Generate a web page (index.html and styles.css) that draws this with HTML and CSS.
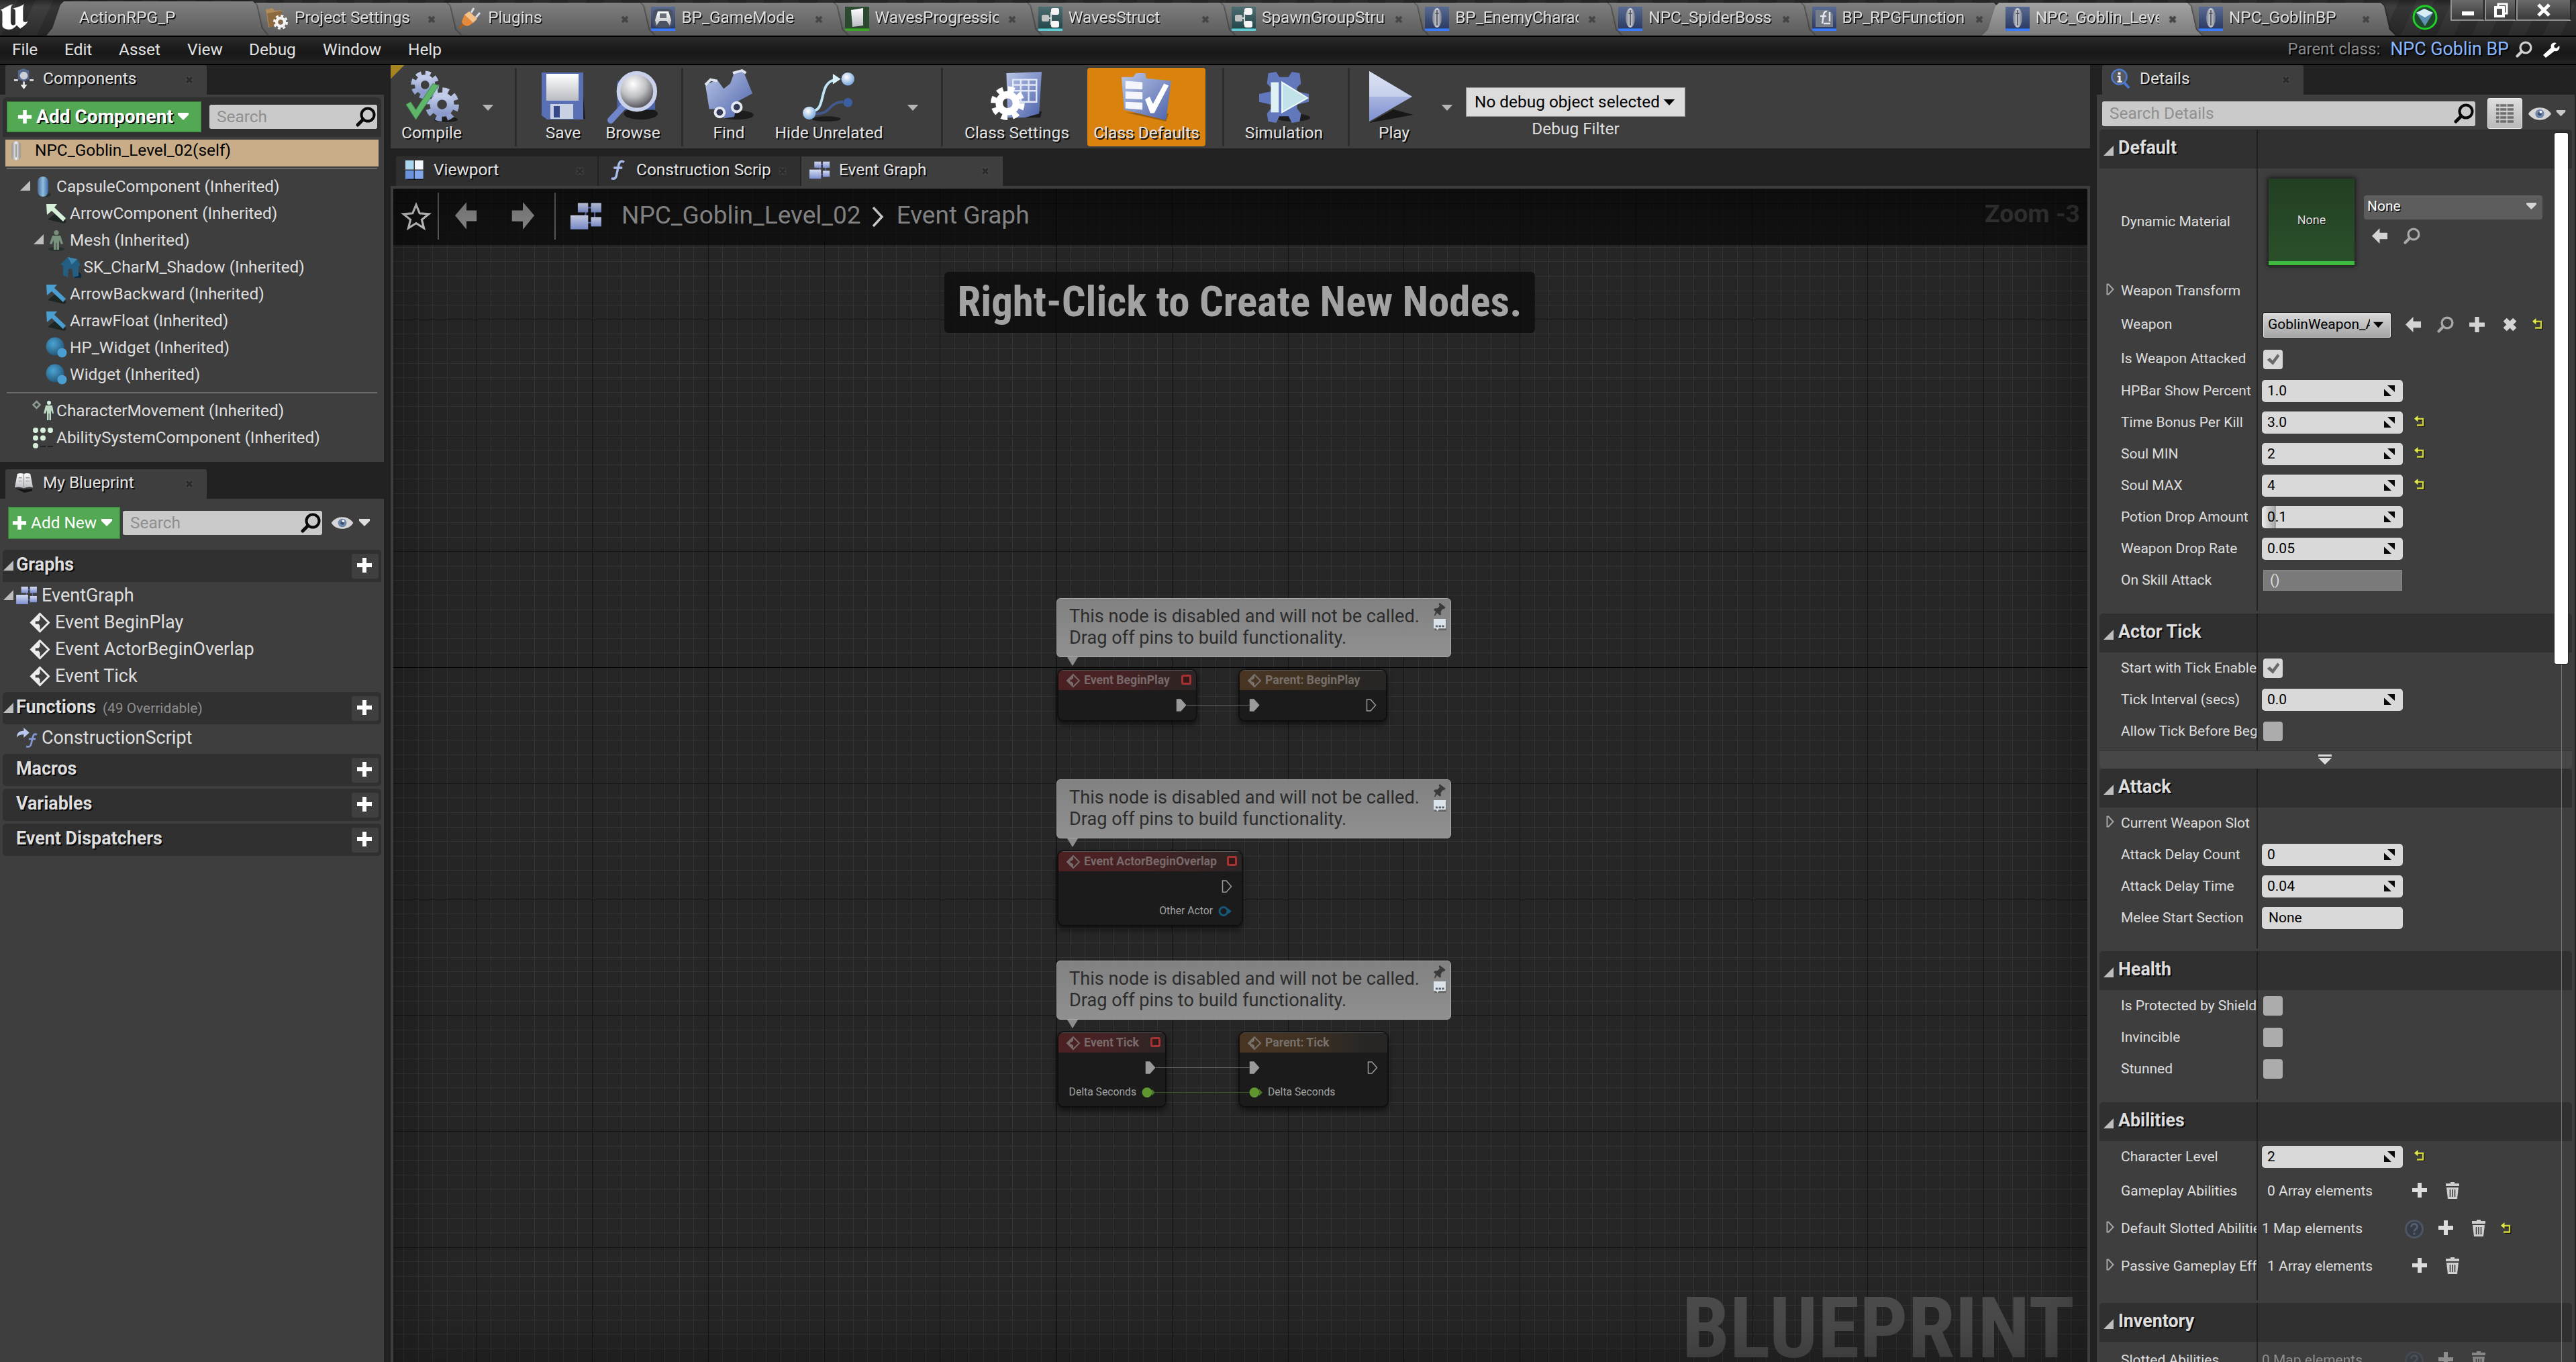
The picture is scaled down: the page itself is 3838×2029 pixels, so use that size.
FILE: index.html
```html
<!DOCTYPE html>
<html lang="en">
<head>
<meta charset="utf-8">
<title>NPC_Goblin_Level_02</title>
<link rel="stylesheet" href="styles.css">
</head>
<body>
<svg class="defs" width="0" height="0" aria-hidden="true">
  <defs>
    <linearGradient id="blue" x1="0" y1="0" x2="0" y2="1"><stop offset="0" stop-color="#d5dcf2"/><stop offset="1" stop-color="#7d8fd0"/></linearGradient>
    <linearGradient id="gear" x1="0" y1="0" x2="0" y2="1"><stop offset="0" stop-color="#c3cdea"/><stop offset="1" stop-color="#8b9acb"/></linearGradient>
    <linearGradient id="steel" x1="0" y1="0" x2="1" y2="1"><stop offset="0" stop-color="#b9c6e6"/><stop offset="1" stop-color="#4d63ac"/></linearGradient>
    <linearGradient id="white" x1="0" y1="0" x2="0" y2="1"><stop offset="0" stop-color="#ffffff"/><stop offset="1" stop-color="#b9bcc2"/></linearGradient>
    <linearGradient id="cap" x1="0" y1="0" x2="1" y2="0"><stop offset="0" stop-color="#4d6a9a"/><stop offset=".5" stop-color="#8fc0dc"/><stop offset="1" stop-color="#3f66a8"/></linearGradient>
    <linearGradient id="pawn" x1="0" y1="0" x2="1" y2="0"><stop offset="0" stop-color="#8d8d93"/><stop offset=".5" stop-color="#f2f2f2"/><stop offset="1" stop-color="#85858b"/></linearGradient>
    <linearGradient id="bp" x1="0" y1="0" x2="0" y2="1"><stop offset="0" stop-color="#5a6b92"/><stop offset="1" stop-color="#26365f"/></linearGradient>
    <linearGradient id="teal" x1="0" y1="0" x2="0" y2="1"><stop offset="0" stop-color="#4d6d70"/><stop offset="1" stop-color="#1f4347"/></linearGradient>
    <radialGradient id="lens" cx=".4" cy=".3" r=".7"><stop offset="0" stop-color="#ffffff"/><stop offset=".5" stop-color="#bfc0c4"/><stop offset="1" stop-color="#4a4a4e"/></radialGradient>
    <radialGradient id="ball" cx=".4" cy=".35" r=".65"><stop offset="0" stop-color="#4aa3d4"/><stop offset="1" stop-color="#255a7c"/></radialGradient>
    <radialGradient id="pearl" cx=".4" cy=".35" r=".65"><stop offset="0" stop-color="#ffffff"/><stop offset="1" stop-color="#78a8dc"/></radialGradient>
    <symbol id="i-pawn" viewBox="0 0 36 36"><rect width="36" height="36" fill="url(#bp)"/><rect y="32.500" width="36" height="3.500" fill="#3d7bff"/><ellipse cx="18" cy="16.500" rx="7" ry="14.500" fill="url(#pawn)" opacity=".8"/><path d="M18 5v23M15.500 10h5" stroke="#55585f" stroke-width="1.800"/></symbol>
    <symbol id="i-mode" viewBox="0 0 36 36"><rect width="36" height="36" fill="url(#bp)"/><rect y="32.500" width="36" height="3.500" fill="#3d7bff"/><rect x="3" y="3" width="30" height="28" rx="8" fill="#4b5261"/><path d="M8 28L6 20l4-13h16l4 13-2 8-5-7H13z" fill="url(#white)"/><path d="M13 10h10v7H13z" fill="#6b6f78"/></symbol>
    <symbol id="i-wave" viewBox="0 0 36 36"><rect width="36" height="36" fill="#2c4a2f"/><rect y="32.500" width="36" height="3.500" fill="#3fa52a"/><path d="M9 5l18-3v26l-16 2z" fill="url(#white)"/></symbol>
    <symbol id="i-struct" viewBox="0 0 36 36"><rect width="36" height="36" fill="url(#teal)"/><rect y="32.500" width="36" height="3.500" fill="#62c9d6"/><path d="M12 17h7M19 8v18h4M19 8h4" stroke="#ddd" stroke-width="2" fill="none"/><rect x="5" y="12" width="11" height="10" rx="2" fill="#c2c4c4"/><rect x="19" y="2" width="12" height="10" rx="3" fill="#f5f5f5"/><rect x="19" y="21" width="12" height="10" rx="3" fill="#f5f5f5"/></symbol>
    <symbol id="i-lib" viewBox="0 0 36 36"><rect width="36" height="36" fill="url(#bp)"/><rect y="32.500" width="36" height="3.500" fill="#3d7bff"/><path d="M5 5h20l6 6v19H5z" fill="#777d86"/><path d="M22 7c-6-1-5 8-7 18M12 14h9M17 25h10M26 8v14" stroke="#e3e6ea" stroke-width="2.500" fill="none"/></symbol>
    <symbol id="i-proj" viewBox="0 0 36 36"><path d="M2 4l10-2 3 4 10-1v20L6 31z" fill="#b08a58"/><path d="M4 10l22-4v18L7 31z" fill="#8d6a3f"/><circle cx="24" cy="23" r="6" fill="none" stroke="#f4f4f4" stroke-width="4.500"/><circle cx="24" cy="23" r="9.500" fill="none" stroke="#f4f4f4" stroke-width="3" stroke-dasharray="4 3.460"/></symbol>
    <symbol id="i-plug" viewBox="0 0 36 36"><path d="M3 32l8-9" stroke="#a85d20" stroke-width="4"/><path d="M10 12l13 12-6 4c-5 2-10-1-11-6z" fill="#e58a3a"/><path d="M10 12l7-5 12 11-6 6z" fill="#f7c28a"/><path d="M20 9l4-7M27 16l6-7" stroke="#d9dde6" stroke-width="3"/></symbol>
    <symbol id="i-x" viewBox="0 0 14 14"><path d="M3 3l8 8M11 3l-8 8" stroke="currentColor" stroke-width="3.500"/></symbol>
    <symbol id="i-find" viewBox="0 0 30 30"><circle cx="18" cy="12" r="9.500" fill="none" stroke="currentColor" stroke-width="4"/><path d="M11 19l-8 8" stroke="currentColor" stroke-width="5" stroke-linecap="round"/></symbol>
    <symbol id="i-down" viewBox="0 0 18 12"><path d="M0 1h18l-9 10z" fill="currentColor"/></symbol>
    <symbol id="i-drop" viewBox="0 0 18 12"><path d="M1 0h16v3l-8 8-8-8z" fill="currentColor"/></symbol>
    <symbol id="i-plus" viewBox="0 0 24 24"><path d="M9 1h6v8h8v6h-8v8H9v-8H1V9h8z" fill="currentColor"/></symbol>
    <symbol id="i-fold" viewBox="0 0 15 15"><path d="M15 0v15H0z" fill="#bdbdbd"/></symbol>
    <symbol id="i-unfold" viewBox="0 0 12 18"><path d="M1.500 1.500h2l7 7.500-7 7.500h-2z" fill="none" stroke="#a5a5a5" stroke-width="2"/></symbol>
    <symbol id="i-eye" viewBox="0 0 36 22"><path d="M0 11C8-2 28-2 36 11 28 24 8 24 0 11z" fill="#d5d5d8"/><circle cx="18" cy="11" r="7" fill="#7087ad"/><circle cx="18" cy="11" r="3" fill="#3d4f70"/><circle cx="19.500" cy="8" r="2" fill="#fff"/></symbol>
    <symbol id="i-graph" viewBox="0 0 34 30"><path d="M18 6h8v16H14z" fill="none" stroke="#5b6db0" stroke-width="1.500"/><rect x="8" y="1" width="11" height="10" fill="url(#blue)"/><rect x="22" y="1" width="11" height="10" fill="url(#blue)"/><rect x="0" y="14" width="19" height="15" fill="url(#blue)"/><rect x="22" y="16" width="11" height="10" fill="url(#blue)"/></symbol>
    <symbol id="i-func" viewBox="0 0 30 36"><path d="M27 4c-6-4-9 1-10 8l-3 14c-1 6-4 8-9 6M9 14h15" fill="none" stroke="#a9bbea" stroke-width="4"/></symbol>
    <symbol id="i-event" viewBox="0 0 32 32"><path d="M16 2.500L29.500 16 16 29.500 2.500 16z" fill="none" stroke="currentColor" stroke-width="3"/><path d="M16 2v9l5 5-5 5v9L2 16z" fill="currentColor"/><path d="M16 11l6 5-6 5-2-3h-5v-4h5z" fill="#3e3e3e"/></symbol>
    <symbol id="i-arrow" viewBox="0 0 32 32"><path d="M3 25l10-8 18 10-3 4z" fill="#1c2622"/><path d="M1 2h16l-4 5 17 16-4 5L9 12l-7 6z" fill="currentColor"/></symbol>
    <symbol id="i-ball" viewBox="0 0 32 32"><circle cx="14" cy="14" r="13.500" fill="url(#ball)"/><circle cx="24.500" cy="23.500" r="7" fill="#4a9ed0"/></symbol>
    <symbol id="i-capsule" viewBox="0 0 32 32"><ellipse cx="20" cy="28" rx="8" ry="3.500" fill="#25302c"/><rect x="8" y="1" width="16" height="30" rx="8" fill="url(#cap)"/></symbol>
    <symbol id="i-man" viewBox="0 0 32 32"><ellipse cx="16" cy="29" rx="12" ry="3" fill="#28302a"/><circle cx="16" cy="4.500" r="3.500" fill="currentColor"/><path d="M10 9h12l4 12-3 1-3-6v14h-3.500V20h-1v10H12V16l-3 6-3-1z" fill="currentColor"/></symbol>
    <symbol id="i-house" viewBox="0 0 32 32"><path d="M20 18l12 8v6H22z" fill="#0d2c3d"/><path d="M1 12L12 1l14 3 5 9-3 2v14l-8 2-2-13-5 1-1 12-7-3V14z" fill="#235d80"/><path d="M12 1l14 3-8 8z" fill="#3c86ad"/></symbol>
    <symbol id="i-dots" viewBox="0 0 32 32"><g fill="#d6f0dc"><circle cx="5" cy="5" r="4"/><circle cx="16" cy="5" r="4"/><circle cx="27" cy="5" r="4"/><circle cx="5" cy="16.500" r="4"/><circle cx="16" cy="16.500" r="4"/><circle cx="5" cy="28" r="4"/></g><path d="M12 29h8M23 29h8" stroke="#222" stroke-width="2"/></symbol>
    <symbol id="i-move" viewBox="0 0 32 32"><path d="M6.500 2l5 5-5 5-5-5z" fill="none" stroke="#8e9c91" stroke-width="2.500"/><circle cx="25" cy="4" r="3" fill="#d6f0dc"/><path d="M20 8h10l2 12h-2l-2-5v15h-2.500V20h-1v10H22V15l-2 5h-3z" fill="#bcd8c4"/></symbol>
    <symbol id="i-book" viewBox="0 0 32 32"><path d="M3 24l13 2 13-1v3l-12 3z" fill="#151515"/><path d="M6 2q5-2 10 0 5-2 10 0l4 21q-7-2-14 1-7-3-14-1z" fill="url(#white)"/><path d="M16 2v21M8 8h5M19 8h6M8 13h5M19 13h6" stroke="#999" stroke-width="1.300"/></symbol>
    <symbol id="i-comp" viewBox="0 0 32 32"><path d="M7 3l8-3 9 3v13l-8 4-9-4z" fill="#53688f"/><circle cx="16" cy="11" r="6" fill="#ccd0d6"/><path d="M1 18h6M25 18h6M16 20v8" stroke="#cfd2d8" stroke-width="3"/><path d="M11 25h10l-5 7z" fill="#eee"/></symbol>
    <symbol id="i-info" viewBox="0 0 32 32"><path d="M20 20l9 10" stroke="#4a78d8" stroke-width="4"/><circle cx="14" cy="13" r="11.500" fill="#55585e" stroke="#4d79cf" stroke-width="2.500"/><path d="M12 6h4v3.500h-4zM11 11h5v8h2v2.500h-7V19h2v-5.500h-2z" fill="#f0f0f0"/></symbol>
    <symbol id="i-view" viewBox="0 0 30 32"><path d="M4 29h24v2H4z" fill="#111"/><rect x="1" y="1" width="13" height="14" fill="#a9d6ec"/><rect x="15.500" y="1" width="13" height="14" fill="#f3f7fb"/><rect x="1" y="16.500" width="13" height="13" fill="#6a93dc"/><rect x="15.500" y="16.500" width="13" height="13" fill="#83a6ea"/></symbol>
    <symbol id="i-expand" viewBox="0 0 18 18"><path d="M6 1h11v10zM1 6.500L12 17H1z" fill="currentColor"/></symbol>
    <symbol id="i-reset" viewBox="0 0 17 17"><path d="M6 15h8.500V5.500H4" fill="none" stroke="#1c1c10" stroke-width="2.500" transform="translate(1 1)"/><path d="M5 14.500h9V5H4" fill="none" stroke="#cfd536" stroke-width="2.300"/><path d="M6.500 0v9.500L1 4.800z" fill="#e4e84a"/></symbol>
    <symbol id="i-use" viewBox="0 0 26 26"><path d="M1 13L13 1v7h12v10H13v7z" fill="currentColor"/></symbol>
    <symbol id="i-cross" viewBox="0 0 24 24"><path d="M5 5l14 14M19 5L5 19" stroke="currentColor" stroke-width="7"/></symbol>
    <symbol id="i-trash" viewBox="0 0 22 26"><path d="M8 0h6v2h7v4H1V2h7zM2 8h18l-2 17H4z" fill="currentColor"/><path d="M7.500 11v11M11 11v11M14.500 11v11" stroke="#3e3e3e" stroke-width="1.600"/></symbol>
    <symbol id="i-help" viewBox="0 0 30 30"><circle cx="15" cy="15" r="12.500" fill="#363c46" stroke="#4c5561" stroke-width="3"/><path d="M10.500 12c0-6 9-6 9-.5 0 3.500-4.500 3.500-4.500 7M15 20.500v3" fill="none" stroke="#566273" stroke-width="2.800"/></symbol>
    <symbol id="i-tick" viewBox="0 0 22 22"><path d="M2.500 11.500l4-3 4 4 7-9.500 3 3-9.500 13z" fill="#6a6a6a"/></symbol>
    <symbol id="i-exec" viewBox="0 0 16 19"><path d="M1.500 1h5.500l7.500 8.500L7 18H1.500z" fill="#9b9b9b" stroke="#9b9b9b" stroke-width="1.500"/></symbol>
    <symbol id="i-execo" viewBox="0 0 16 19"><path d="M1.500 1h5.500l7.500 8.500L7 18H1.500z" fill="none" stroke="#9b9b9b" stroke-width="1.500"/></symbol>
    <symbol id="i-node" viewBox="0 0 22 22"><path d="M11 2l9 9-9 9-9-9z" fill="none" stroke="currentColor" stroke-width="2"/><path d="M11 1.500v6L8.500 9.500h-2v3h2l2.500 2v6L1.500 11z" fill="currentColor"/></symbol>
    <symbol id="i-pin" viewBox="0 0 18 20"><path d="M9 0l8.500 6.500-1.500 2.500-3 .5-2.500 4 .5 4-2 1-4-3.500L2 19.500 1 19l2-6L0 10.500 1.500 8.500 6 8l3-3.500L7.500 2z" fill="#3a3a3a"/></symbol>
    <symbol id="i-note" viewBox="0 0 20 20"><path d="M1 2h19v16H1z" fill="#555" opacity=".7"/><path d="M0 0h19v15H8l-2 3-2-3H0z" fill="#dbe4ea"/><path d="M3 10h3.500v3H3zM8 10h3.500v3H8zM13 10h3.500v3H13z" fill="#5a6168"/></symbol>
  </defs>
</svg>

<header class="titlebar">
  <svg class="logo" viewBox="0 0 46 42"><path d="M0 10C5 8 10 3 18 1c-3 4-3 5-3 11v16c0 4 3 6 6 3V12c0-3-2-4-4-4 6-3 12-3 17-8-2 4-2 5-2 10v15c0 3 3 4 7 1-3 7-8 9-11 12l-5-5c-4 5-9 8-16 5-5-2-4-6-4-10V14c0-3-1-4-3-4z" transform="translate(0 1) scale(1.080 1)" fill="#fff" stroke="#000" stroke-opacity=".3"/></svg>
  <nav class="tabs">
    <div class="tab first"><span class="tname">ActionRPG_P</span></div>
    <div class="tab"><svg class="ticon"><use href="#i-proj"/></svg><span class="tname">Project Settings</span><svg class="x"><use href="#i-x"/></svg></div>
    <div class="tab"><svg class="ticon"><use href="#i-plug"/></svg><span class="tname">Plugins</span><svg class="x"><use href="#i-x"/></svg></div>
    <div class="tab"><svg class="ticon"><use href="#i-mode"/></svg><span class="tname">BP_GameMode</span><svg class="x"><use href="#i-x"/></svg></div>
    <div class="tab"><svg class="ticon"><use href="#i-wave"/></svg><span class="tname">WavesProgression</span><svg class="x"><use href="#i-x"/></svg></div>
    <div class="tab"><svg class="ticon"><use href="#i-struct"/></svg><span class="tname">WavesStruct</span><svg class="x"><use href="#i-x"/></svg></div>
    <div class="tab"><svg class="ticon"><use href="#i-struct"/></svg><span class="tname">SpawnGroupStruct</span><svg class="x"><use href="#i-x"/></svg></div>
    <div class="tab"><svg class="ticon"><use href="#i-pawn"/></svg><span class="tname">BP_EnemyCharacter</span><svg class="x"><use href="#i-x"/></svg></div>
    <div class="tab"><svg class="ticon"><use href="#i-pawn"/></svg><span class="tname">NPC_SpiderBoss</span><svg class="x"><use href="#i-x"/></svg></div>
    <div class="tab"><svg class="ticon"><use href="#i-lib"/></svg><span class="tname">BP_RPGFunctionLibrary</span><svg class="x"><use href="#i-x"/></svg></div>
    <div class="tab active"><svg class="ticon"><use href="#i-pawn"/></svg><span class="tname">NPC_Goblin_Level_02</span><svg class="x"><use href="#i-x"/></svg></div>
    <div class="tab"><svg class="ticon"><use href="#i-pawn"/></svg><span class="tname">NPC_GoblinBP</span><svg class="x"><use href="#i-x"/></svg></div>
  </nav>
  <svg class="source" viewBox="0 0 38 38"><circle cx="19" cy="19" r="17" fill="#20492c" stroke="#1fd02a" stroke-width="3"/><path d="M6 12l12-6 13 6-12 20z" fill="#5c8fb0"/><path d="M6 12l12-6 13 6-12 7z" fill="#d7ecf5"/></svg>
  <div class="winctl">
    <span class="wbtn"><svg viewBox="0 0 22 22"><path d="M2 13h18v6H2z" fill="#fff"/></svg></span>
    <span class="wbtn mid"><svg viewBox="0 0 22 22"><path d="M7 5V2h13v14h-4" fill="none" stroke="#fff" stroke-width="3"/><rect x="3" y="7" width="12" height="13" fill="none" stroke="#fff" stroke-width="4"/></svg></span>
    <span class="wbtn wide"><svg viewBox="0 0 22 22"><path d="M3 3l16 16M19 3L3 19" stroke="#fff" stroke-width="5"/></svg></span>
  </div>
</header>

<div class="menubar">
  <span class="mi m1">File</span><span class="mi m2">Edit</span><span class="mi m3">Asset</span><span class="mi m4">View</span><span class="mi m5">Debug</span><span class="mi m6">Window</span><span class="mi">Help</span>
  <span class="parent">Parent class:</span><span class="pclass">NPC Goblin BP</span>
  <svg class="pfind"><use href="#i-find"/></svg>
  <svg class="wrench" viewBox="0 0 28 24"><path d="M2 20L14 9c-2-5 3-9 8-7l-4 4 1 3 3 1 4-4c2 5-2 9-7 8L6 24z" fill="#fff"/></svg>
</div>

<main class="main">
  <aside class="left">
    <div class="ptab"><svg class="picon"><use href="#i-comp"/></svg><span class="pt">Components</span><svg class="x"><use href="#i-x"/></svg></div>
    <section class="panel components">
      <div class="cbar">
        <button class="green big"><svg class="pl"><use href="#i-plus"/></svg><span>Add Component</span><svg class="dr"><use href="#i-drop"/></svg></button>
        <div class="search s1"><span>Search</span><svg><use href="#i-find"/></svg></div>
      </div>
      <div class="selfrow"><svg viewBox="0 0 18 32"><rect x="2" y="1" width="14" height="30" rx="6" fill="url(#pawn)" stroke="#b9a184"/><path d="M9 6v20" stroke="#999" stroke-width="2"/></svg><span>NPC_Goblin_Level_02(self)</span></div>
      <hr>
      <div class="tree">
        <div class="tr"><svg class="fold"><use href="#i-fold"/></svg><svg class="ic"><use href="#i-capsule"/></svg><span>CapsuleComponent (Inherited)</span></div>
        <div class="tr d1"><i class="fold"></i><svg class="ic mint"><use href="#i-arrow"/></svg><span>ArrowComponent (Inherited)</span></div>
        <div class="tr d1"><svg class="fold"><use href="#i-fold"/></svg><svg class="ic sage"><use href="#i-man"/></svg><span>Mesh (Inherited)</span></div>
        <div class="tr d2"><i class="fold"></i><svg class="ic"><use href="#i-house"/></svg><span>SK_CharM_Shadow (Inherited)</span></div>
        <div class="tr d1"><i class="fold"></i><svg class="ic sky"><use href="#i-arrow"/></svg><span>ArrowBackward (Inherited)</span></div>
        <div class="tr d1"><i class="fold"></i><svg class="ic sky"><use href="#i-arrow"/></svg><span>ArrawFloat (Inherited)</span></div>
        <div class="tr d1"><i class="fold"></i><svg class="ic"><use href="#i-ball"/></svg><span>HP_Widget (Inherited)</span></div>
        <div class="tr d1"><i class="fold"></i><svg class="ic"><use href="#i-ball"/></svg><span>Widget (Inherited)</span></div>
      </div>
      <hr class="hr2">
      <div class="tree">
        <div class="tr"><i class="fold"></i><svg class="ic"><use href="#i-move"/></svg><span>CharacterMovement (Inherited)</span></div>
        <div class="tr"><i class="fold"></i><svg class="ic"><use href="#i-dots"/></svg><span>AbilitySystemComponent (Inherited)</span></div>
      </div>
    </section>

    <div class="ptab second"><svg class="picon"><use href="#i-book"/></svg><span class="pt">My Blueprint</span><svg class="x"><use href="#i-x"/></svg></div>
    <section class="panel blueprint">
      <div class="bbar">
        <button class="green small"><svg class="pl"><use href="#i-plus"/></svg><span>Add New</span><svg class="dr"><use href="#i-drop"/></svg></button>
        <div class="search s2"><span>Search</span><svg><use href="#i-find"/></svg></div>
        <svg class="eye"><use href="#i-eye"/></svg><svg class="dr"><use href="#i-drop"/></svg>
      </div>
      <div class="sec"><svg class="sf"><use href="#i-fold"/></svg><b>Graphs</b><span class="add"><svg><use href="#i-plus"/></svg></span></div>
      <div class="br"><svg class="sf"><use href="#i-fold"/></svg><svg class="gi"><use href="#i-graph"/></svg><span>EventGraph</span></div>
      <div class="br ev"><svg><use href="#i-event"/></svg><span>Event BeginPlay</span></div>
      <div class="br ev"><svg><use href="#i-event"/></svg><span>Event ActorBeginOverlap</span></div>
      <div class="br ev"><svg><use href="#i-event"/></svg><span>Event Tick</span></div>
      <div class="sec gap"><svg class="sf"><use href="#i-fold"/></svg><b>Functions</b><small>(49 Overridable)</small><span class="add"><svg><use href="#i-plus"/></svg></span></div>
      <div class="br fn"><svg viewBox="0 0 34 34"><path d="M1 17c0-8 4-11 11-11V1l9 8-9 8v-5c-5 0-9 1-11 5z" fill="#b9c8ec"/><path d="M33 12c-5-2-6 1-7 6l-2 8c-1 5-3 6-8 5M20 19h11" fill="none" stroke="#8297d4" stroke-width="3"/></svg><span>ConstructionScript</span></div>
      <div class="sec gap"><i class="sf"></i><b>Macros</b><span class="add"><svg><use href="#i-plus"/></svg></span></div>
      <div class="sec gap"><i class="sf"></i><b>Variables</b><span class="add"><svg><use href="#i-plus"/></svg></span></div>
      <div class="sec gap"><i class="sf"></i><b>Event Dispatchers</b><span class="add"><svg><use href="#i-plus"/></svg></span></div>
    </section>
  </aside>

  <section class="center">
    <div class="toolbar">
      <div class="tool t-compile"><svg viewBox="0 0 80 80"><ellipse cx="62" cy="75" rx="18" ry="4" fill="#1d1d1d"/><g fill="none" stroke="url(#gear)"><circle cx="30" cy="22" r="11" stroke-width="9"/><circle cx="30" cy="22" r="18" stroke-width="7" stroke-dasharray="8 6.140"/><circle cx="56" cy="52" r="13" stroke-width="11"/><circle cx="56" cy="52" r="22" stroke-width="8" stroke-dasharray="9.500 7.780"/></g><path d="M1 52l7-4 8 12L42 20l9 3-35 52z" fill="#5fb56a" stroke="#3f8a4a"/></svg><span>Compile</span></div>
      <svg class="ddown a1"><use href="#i-down"/></svg><i class="sep s-a"></i>
      <div class="tool t-save"><svg viewBox="0 0 66 76"><path d="M60 6l6 66H10z" fill="#1d1d1d"/><path d="M1 3h62v70H9l-8-6z" fill="#5971b4"/><rect x="8" y="5" width="48" height="40" fill="url(#white)"/><rect x="14" y="50" width="34" height="22" fill="#c8d0e4"/><rect x="19" y="53" width="9" height="17" fill="#34488a"/></svg><span>Save</span></div>
      <div class="tool t-browse"><svg viewBox="0 0 80 80"><ellipse cx="52" cy="66" rx="26" ry="9" fill="#1a1a1a"/><path d="M16 16h58v44H16z" fill="#4d64ab"/><path d="M28 52L6 76" stroke="#6f86cc" stroke-width="10" stroke-linecap="round"/><circle cx="46" cy="32" r="28" fill="url(#lens)" stroke="#c9d2ea" stroke-width="6"/></svg><span>Browse</span></div>
      <i class="sep s-b"></i>
      <div class="tool t-find"><svg viewBox="0 0 80 80"><ellipse cx="52" cy="68" rx="26" ry="7" fill="#1d1d1d"/><path d="M4 22l18-8 10 14 10-8 6-16 14-3 14 34-22 12-6 24-16 2-4-14H10z" fill="url(#steel)"/><ellipse cx="26" cy="64" rx="9" ry="9" fill="#e6e9f2"/><ellipse cx="52" cy="56" rx="9" ry="9" fill="#e6e9f2"/><circle cx="26" cy="64" r="5" fill="#333b55"/><circle cx="52" cy="56" r="5" fill="#333b55"/><path d="M4 22l8-8 10 2M46 4l14-4 6 4" stroke="#dfe3ee" stroke-width="4" fill="none"/></svg><span>Find</span></div>
      <div class="tool t-hide"><svg viewBox="0 0 80 80"><ellipse cx="36" cy="74" rx="22" ry="4" fill="#1d1d1d"/><path d="M10 62c30 4 10-46 42-48" fill="none" stroke="#bfe6f4" stroke-width="4"/><path d="M46 5l12 8-12 8z" fill="#d8f2fa"/><path d="M18 66c26 2 20-18 44-18" fill="none" stroke="#40588c" stroke-width="4"/><circle cx="69" cy="13" r="10" fill="url(#pearl)"/><circle cx="10" cy="65" r="10" fill="url(#pearl)"/><circle cx="69" cy="49" r="7" fill="#3b5fa0"/></svg><span>Hide Unrelated</span></div>
      <svg class="ddown a2"><use href="#i-down"/></svg><i class="sep s-c"></i>
      <div class="tool t-set"><svg viewBox="0 0 80 80"><path d="M30 72h46l2-10-48 10z" fill="#1d1d1d"/><path d="M24 4l54-2-4 64-22 6H26z" fill="url(#steel)"/><path d="M34 14h36v34H34zM34 22h36M34 31h36M46 14v34M58 14v34" fill="none" stroke="#e2e8f6" stroke-width="2.500"/><circle cx="26" cy="50" r="13" fill="none" stroke="#fff" stroke-width="11"/><circle cx="26" cy="50" r="22" fill="none" stroke="#fff" stroke-width="8" stroke-dasharray="9.500 7.780"/></svg><span>Class Settings</span></div>
      <div class="tool t-def"><svg viewBox="0 0 80 80"><path d="M8 64l62 14 4-12z" fill="#9c6110"/><path d="M2 10h18l4-6h14l2 8 38 4-8 60L6 60z" fill="url(#steel)"/><path d="M8 16l26 2v11l-26-1zM8 32l26 1v11l-26-1zM8 48l26 1v11l-26-2z" fill="#f4f6fb"/><path d="M38 44l7-4 5 11 17-31 7 3-22 42h-6z" fill="#fff"/></svg><span>Class Defaults</span></div>
      <i class="sep s-d"></i>
      <div class="tool t-sim"><svg viewBox="0 0 80 80"><ellipse cx="54" cy="72" rx="26" ry="6" fill="#1d1d1d"/><path d="M16 4l12-2 5 8h14l5-8 12 2 2 16-6 6v6l18 4v12l-18 4v6l6 8-2 12-12 2-5-10H33l-5 10-12-2-2-12 6-8v-6L2 48V36l18-4v-6l-6-6z" fill="#6178bd"/><path d="M20 18h12v46H20z" fill="#dff1f4"/><path d="M37 18l39 24-39 22z" fill="#c2e2ea" stroke="#f2fbfd" stroke-width="2"/></svg><span>Simulation</span></div>
      <i class="sep s-e"></i>
      <div class="tool t-play"><svg viewBox="0 0 68 80"><path d="M2 78l66-12-30-8z" fill="#181818"/><path d="M2 1l64 38L2 76z" fill="url(#blue)"/><path d="M2 1l64 38H2z" fill="#e3e9f6" opacity=".5"/></svg><span>Play</span></div>
      <svg class="ddown a3"><use href="#i-down"/></svg>
      <div class="debug"><div class="dcombo"><span>No debug object selected</span><svg><use href="#i-down"/></svg></div><span>Debug Filter</span></div>
    </div>
    <div class="gtabs">
      <div class="gtab"><svg class="picon"><use href="#i-view"/></svg><span class="pt">Viewport</span><svg class="x"><use href="#i-x"/></svg></div>
      <div class="gtab"><svg class="picon"><use href="#i-func"/></svg><span class="pt">Construction Script</span><svg class="x"><use href="#i-x"/></svg></div>
      <div class="gtab on"><svg class="picon"><use href="#i-graph"/></svg><span class="pt">Event Graph</span><svg class="x"><use href="#i-x"/></svg></div>
    </div>
    <div class="canvas">
      <div class="crumbs">
        <svg class="star" viewBox="0 0 40 38"><path d="M20 3l5 12 13 1-10 8 3 12-11-7-11 7 3-12L2 16l13-1z" fill="none" stroke="#d0d0d0" stroke-width="3"/></svg>
        <i class="vs"></i>
        <svg class="nav n1" viewBox="0 0 36 44"><path d="M0 21L18 0v13h16v17H18v13z" fill="#868686"/></svg>
        <svg class="nav n2" viewBox="0 0 36 44"><path d="M36 21L18 0v13H1v17h17v13z" fill="#868686"/></svg>
        <i class="vs v2"></i>
        <svg class="cg" viewBox="0 0 34 30"><use href="#i-graph"/></svg>
        <span class="c1">NPC_Goblin_Level_02</span>
        <svg class="chev" viewBox="0 0 20 30"><path d="M3 1l13 14L3 29" fill="none" stroke="#d8d8d8" stroke-width="3.500"/></svg>
        <span>Event Graph</span>
        <b class="zoom">Zoom -3</b>
      </div>
      <div class="hint">Right-Click to Create New Nodes.</div>
      <div class="mark">BLUEPRINT</div>

      <div class="bubble p1"><p>This node is disabled and will not be called.<br>Drag off pins to build functionality.</p><div class="bi"><svg><use href="#i-pin"/></svg><svg><use href="#i-note"/></svg></div></div>
      <div class="node ev1"><header class="red"><svg><use href="#i-node"/></svg><b>Event BeginPlay</b><i class="dlg"></i></header><div class="pins"><span></span><svg class="ex"><use href="#i-exec"/></svg></div></div>
      <div class="node pa1"><header class="tan"><svg><use href="#i-node"/></svg><b>Parent: BeginPlay</b></header><div class="pins"><svg class="ex"><use href="#i-exec"/></svg><svg class="ex"><use href="#i-execo"/></svg></div></div>
      <i class="wire w1"></i>

      <div class="bubble p2"><p>This node is disabled and will not be called.<br>Drag off pins to build functionality.</p><div class="bi"><svg><use href="#i-pin"/></svg><svg><use href="#i-note"/></svg></div></div>
      <div class="node ev2"><header class="red"><svg><use href="#i-node"/></svg><b>Event ActorBeginOverlap</b><i class="dlg"></i></header><div class="pins"><span></span><svg class="ex"><use href="#i-execo"/></svg></div>
        <div class="pins data"><span></span><span class="lab">Other Actor</span><svg class="dot" viewBox="0 0 20 16"><circle cx="8" cy="8" r="6" fill="none" stroke="#15597a" stroke-width="3"/><path d="M15 4l5 4-5 4z" fill="#15597a"/></svg></div></div>

      <div class="bubble p3"><p>This node is disabled and will not be called.<br>Drag off pins to build functionality.</p><div class="bi"><svg><use href="#i-pin"/></svg><svg><use href="#i-note"/></svg></div></div>
      <div class="node ev3"><header class="red"><svg><use href="#i-node"/></svg><b>Event Tick</b><i class="dlg"></i></header><div class="pins"><span></span><svg class="ex"><use href="#i-exec"/></svg></div>
        <div class="pins data"><span></span><span class="lab">Delta Seconds</span><svg class="dot" viewBox="0 0 20 16"><circle cx="8" cy="8" r="7.500" fill="#5f962f"/><path d="M15 3l5 5-5 5z" fill="#4b7526"/></svg></div></div>
      <div class="node pa3"><header class="tan"><svg><use href="#i-node"/></svg><b>Parent: Tick</b></header><div class="pins"><svg class="ex"><use href="#i-exec"/></svg><svg class="ex"><use href="#i-execo"/></svg></div>
        <div class="pins in"><svg class="dot" viewBox="0 0 20 16"><circle cx="8" cy="8" r="7.500" fill="#5f962f"/><path d="M15 3l5 5-5 5z" fill="#4b7526"/></svg><span class="lab">Delta Seconds</span></div></div>
      <i class="wire w3"></i><i class="wire w4"></i>
    </div>
  </section>

  <aside class="right">
    <div class="ptab"><svg class="picon"><use href="#i-info"/></svg><span class="pt">Details</span><svg class="x"><use href="#i-x"/></svg></div>
    <section class="panel details">
      <div class="dbar">
        <div class="search s3"><span>Search Details</span><svg><use href="#i-find"/></svg></div>
        <span class="gridbtn"><svg viewBox="0 0 28 30"><path d="M1 3h26M1 9h26M1 15h26M1 21h26M1 27h26" stroke="#6d6d6d" stroke-width="3.500"/><path d="M6.500 0v30M17 0v30" stroke="#d0d0d0" stroke-width="1.500"/></svg></span>
        <svg class="eye"><use href="#i-eye"/></svg><svg class="dr"><use href="#i-drop"/></svg>
      </div>
      <div class="props">
        <div class="cat"><svg class="sf"><use href="#i-fold"/></svg><b>Default</b></div>
        <div class="group">
          <div class="row mat"><label>Dynamic Material</label><div class="val">
            <div class="thumb">None</div>
            <div class="asset"><div class="acombo"><span>None</span><svg><use href="#i-drop"/></svg></div><div class="aicons"><svg class="lt"><use href="#i-use"/></svg><svg class="gr"><use href="#i-find"/></svg></div></div>
          </div></div>
          <div class="row sub"><label><svg class="uf"><use href="#i-unfold"/></svg>Weapon Transform</label><div class="val"></div></div>
          <div class="row wep"><label>Weapon</label><div class="val"><div class="wcombo"><span>GoblinWeapon_Axe</span><svg><use href="#i-down"/></svg></div>
            <svg class="g26 k1"><use href="#i-use"/></svg><svg class="g26 k2 gr"><use href="#i-find"/></svg><svg class="g26 k3"><use href="#i-plus"/></svg><svg class="g26 k4"><use href="#i-cross"/></svg><svg class="rs k5"><use href="#i-reset"/></svg></div></div>
          <div class="row chk"><label>Is Weapon Attacked</label><div class="val"><i class="cb on"><svg><use href="#i-tick"/></svg></i></div></div>
          <div class="row"><label>HPBar Show Percent</label><div class="val"><div class="num"><span>1.0</span><svg><use href="#i-expand"/></svg></div></div></div>
          <div class="row"><label>Time Bonus Per Kill</label><div class="val"><div class="num"><span>3.0</span><svg><use href="#i-expand"/></svg></div><svg class="rs"><use href="#i-reset"/></svg></div></div>
          <div class="row"><label>Soul MIN</label><div class="val"><div class="num"><span>2</span><svg><use href="#i-expand"/></svg></div><svg class="rs"><use href="#i-reset"/></svg></div></div>
          <div class="row"><label>Soul MAX</label><div class="val"><div class="num"><span>4</span><svg><use href="#i-expand"/></svg></div><svg class="rs"><use href="#i-reset"/></svg></div></div>
          <div class="row"><label>Potion Drop Amount</label><div class="val"><div class="num part"><span>0.1</span><svg><use href="#i-expand"/></svg></div></div></div>
          <div class="row"><label>Weapon Drop Rate</label><div class="val"><div class="num"><span>0.05</span><svg><use href="#i-expand"/></svg></div></div></div>
          <div class="row"><label>On Skill Attack</label><div class="val"><div class="ro">()</div></div></div>
        </div>
        <div class="cat"><svg class="sf"><use href="#i-fold"/></svg><b>Actor Tick</b></div>
        <div class="group tight">
          <div class="row"><label>Start with Tick Enabled</label><div class="val"><i class="cb on"><svg><use href="#i-tick"/></svg></i></div></div>
          <div class="row"><label>Tick Interval (secs)</label><div class="val"><div class="num"><span>0.0</span><svg><use href="#i-expand"/></svg></div></div></div>
          <div class="row"><label>Allow Tick Before Begin Play</label><div class="val"><i class="cb"></i></div></div>
        </div>
        <div class="adv"><svg viewBox="0 0 20 15"><path d="M0 0h20v3H0zM0 5h20L10 15z" fill="#ddd"/></svg></div>
        <div class="cat"><svg class="sf"><use href="#i-fold"/></svg><b>Attack</b></div>
        <div class="group">
          <div class="row sub"><label><svg class="uf"><use href="#i-unfold"/></svg>Current Weapon Slot</label><div class="val"></div></div>
          <div class="row"><label>Attack Delay Count</label><div class="val"><div class="num"><span>0</span><svg><use href="#i-expand"/></svg></div></div></div>
          <div class="row"><label>Attack Delay Time</label><div class="val"><div class="num"><span>0.04</span><svg><use href="#i-expand"/></svg></div></div></div>
          <div class="row"><label>Melee Start Section</label><div class="val"><div class="num"><span class="nm">None</span></div></div></div>
        </div>
        <div class="cat"><svg class="sf"><use href="#i-fold"/></svg><b>Health</b></div>
        <div class="group">
          <div class="row"><label>Is Protected by Shield</label><div class="val"><i class="cb"></i></div></div>
          <div class="row"><label>Invincible</label><div class="val"><i class="cb"></i></div></div>
          <div class="row"><label>Stunned</label><div class="val"><i class="cb"></i></div></div>
        </div>
        <div class="cat"><svg class="sf"><use href="#i-fold"/></svg><b>Abilities</b></div>
        <div class="group">
          <div class="row"><label>Character Level</label><div class="val"><div class="num"><span>2</span><svg><use href="#i-expand"/></svg></div><svg class="rs"><use href="#i-reset"/></svg></div></div>
          <div class="row arr"><label>Gameplay Abilities</label><div class="val"><span class="cnt a">0 Array elements</span><svg class="pl"><use href="#i-plus"/></svg><svg class="tb"><use href="#i-trash"/></svg></div></div>
          <div class="row arr sub"><label><svg class="uf"><use href="#i-unfold"/></svg>Default Slotted Abilities</label><div class="val"><span class="cnt">1 Map elements</span><svg class="hp"><use href="#i-help"/></svg><svg class="pl"><use href="#i-plus"/></svg><svg class="tb"><use href="#i-trash"/></svg><svg class="rs"><use href="#i-reset"/></svg></div></div>
          <div class="row arr sub"><label><svg class="uf"><use href="#i-unfold"/></svg>Passive Gameplay Effects</label><div class="val"><span class="cnt a">1 Array elements</span><svg class="pl"><use href="#i-plus"/></svg><svg class="tb"><use href="#i-trash"/></svg></div></div>
        </div>
        <div class="cat"><svg class="sf"><use href="#i-fold"/></svg><b>Inventory</b></div>
        <div class="group">
          <div class="row arr"><label>Slotted Abilities</label><div class="val dim"><span class="cnt">0 Map elements</span><svg class="hp"><use href="#i-help"/></svg><svg class="pl"><use href="#i-plus"/></svg><svg class="tb"><use href="#i-trash"/></svg></div></div>
        </div>
        <div class="scroll"><i></i></div>
      </div>
    </section>
  </aside>
</main>
</body>
</html>
```
FILE: styles.css
```css
* { box-sizing: border-box; }
html, body { margin: 0; height: 2029px; overflow: hidden; }
body {
  width: 3838px;
  display: flex;
  flex-direction: column;
  background: #222;
  color: #dedede;
  font: 24.4px/1.2 Roboto, "Liberation Sans", sans-serif;
}
svg { display: block; flex: none; overflow: visible; }
.defs { position: absolute; }
span, b, label, small { white-space: nowrap; }
i { display: block; flex: none; }
p { margin: 0; }
button { border: 0; padding: 0; margin: 0; font: inherit; color: #fff; }
.x { width: 14px; height: 14px; color: #2b2b2b; filter: drop-shadow(0 0 1px #666); }

/* title bar */
.titlebar {
  height: 53px;
  flex: none;
  display: flex;
  align-items: flex-start;
  background:
    linear-gradient(rgba(0,0,0,.35) 0, rgba(0,0,0,0) 10px, rgba(0,0,0,.3)),
    repeating-linear-gradient(115deg, #3f3f3f 0 24px, #353535 24px 48px);
}
.logo { width: 46px; height: 42px; margin: 4px 29px 0 0; }
.tabs { display: flex; width: 3481px; margin-top: 2px; }
.tab {
  position: relative;
  width: 288.2px;
  height: 51px;
  flex: none;
  display: flex;
  align-items: center;
  padding: 0 23px 3px 9px;
  filter: drop-shadow(1px 0 1px rgba(0,0,0,.55));
}
.tab::before {
  content: "";
  position: absolute;
  inset: 2px -14px 0 -10px;
  z-index: -1;
  background: linear-gradient(#7f7f7f, #5b5b5b);
  clip-path: polygon(0 0, calc(100% - 22px) 0, calc(100% - 17px) 5px, calc(100% - 9px) 40px, 100% 100%, 0 100%);
}
.tab.first { width: 310px; padding-left: 43px; }
.tab.first::before {
  inset: 0 -14px 0 -6px;
  clip-path: polygon(26px 0, calc(100% - 22px) 0, calc(100% - 17px) 5px, calc(100% - 9px) 40px, 100% 100%, 0 100%, 9px 40px, 21px 5px);
}
.tab.active::before {
  left: -26px;
  background: linear-gradient(#a3a3a3, #7c7c7c);
  clip-path: polygon(26px 0, calc(100% - 22px) 0, calc(100% - 17px) 5px, calc(100% - 9px) 40px, 100% 100%, 0 100%, 9px 40px, 20px 5px);
}
.tab:nth-child(1) { z-index: 12; }
.tab:nth-child(2) { z-index: 11; }
.tab:nth-child(3) { z-index: 10; }
.tab:nth-child(4) { z-index: 9; }
.tab:nth-child(5) { z-index: 8; }
.tab:nth-child(6) { z-index: 7; }
.tab:nth-child(7) { z-index: 6; }
.tab:nth-child(8) { z-index: 5; }
.tab:nth-child(9) { z-index: 4; }
.tab:nth-child(10) { z-index: 3; }
.tab:nth-child(11) { z-index: 13; }
.tab:nth-child(12) { z-index: 1; }
.ticon { width: 36px; height: 36px; margin-right: 9px; margin-top: 4px; }
.tname { flex: 1; overflow: hidden; margin-right: 13px; text-shadow: 1.5px 1.5px 0 #111; }
.tab .x { margin-top: 5px; color: #444; }
.source { width: 38px; height: 38px; margin: 7px 19px 0 38px; }
.winctl { display: flex; }
.wbtn {
  width: 51px;
  height: 31px;
  display: flex;
  align-items: center;
  justify-content: center;
  border: 2px solid #909090;
  border-top: 0;
  border-right-color: #222;
  background: linear-gradient(#6a6a6a, #3a3a3a);
}
.wbtn.mid { width: 47px; }
.wbtn.wide { width: 82px; }
.wbtn svg { width: 22px; height: 22px; }

/* menu bar */
.menubar {
  height: 44px;
  flex: none;
  display: flex;
  align-items: center;
  padding: 0 23px 3px 18px;
  border-top: 2px solid #000;
  border-bottom: 2px solid #000;
  background: linear-gradient(#2b2b2b, #1a1a1a 45%, #181818 60%, #222);
  color: #e2e2e2;
}
.m1 { width: 78px; } .m2 { width: 81px; } .m3 { width: 102px; }
.m4 { width: 92px; } .m5 { width: 110px; } .m6 { width: 127px; }
.parent { margin-left: auto; color: #8b8b8b; font-size: 24px; text-shadow: 2px 2px #000; }
.pclass { margin-left: 15px; color: #88b6ff; font-size: 26.8px; text-shadow: 2px 2px #000; }
.pfind { width: 25px; height: 25px; margin-left: 10px; color: #cfcfcf; }
.wrench { width: 28px; height: 24px; margin-left: 14px; }

.main { flex: 1; display: flex; min-height: 0; }
.left { width: 572px; flex: none; display: flex; flex-direction: column; }
.ptab, .gtab {
  display: flex;
  align-items: center;
  height: 44px;
  width: 300px;
  padding: 0 19px 4px 12px;
  background: #3e3e3e;
  flex: none;
}
.ptab { margin-left: 8px; border-radius: 3px 3px 0 0; }
.picon { width: 31px; height: 31px; margin-right: 13px; }
.pt { flex: 1; overflow: hidden; text-shadow: 2px 2px #0a0a0a; color: #e2e2e2; }
.panel { background: #3e3e3e; }

.components { height: 547px; flex: none; overflow: hidden; padding-top: 4px; }
.cbar {
  display: flex;
  align-items: center;
  height: 59px;
  margin: 0 4px;
  padding: 0 6px 1px;
  background: #303030;
  border-radius: 6px 6px 0 0;
}
.green {
  display: flex;
  align-items: center;
  height: 46px;
  background: #53a953;
  border: 1px solid #3b7e3b;
}
.green.big { width: 290px; font-size: 28.1px; font-weight: 700; padding-left: 15px; margin-right: 12px; text-shadow: 2px 2px #111; }
.green .pl { width: 22px; height: 22px; margin-right: 6px; }
.green .dr { width: 18px; height: 12px; margin-left: 6px; }
.green.small { width: 167px; height: 48px; padding-left: 5px; }
.search {
  display: flex;
  align-items: center;
  justify-content: space-between;
  height: 36px;
  padding: 0 2px 0 11px;
  background: #cacaca;
  color: #8f8f8f;
  border-radius: 3px;
}
.search svg { width: 30px; height: 30px; color: #080808; }
.s1 { width: 250px; }
.selfrow {
  display: flex;
  height: 40px;
  margin: 4px 8px 0;
  padding-left: 7px;
  background: #c8ad88;
  color: #000;
}
.selfrow svg { width: 18px; height: 31px; margin: 1px 19px 0 0; }
.selfrow span { line-height: 32px; }
hr { height: 2px; border: 0; margin: 2px 10px 6px; background: #6a6a6a; }
.hr2 { margin: 6px 10px 6px; }
.tr { display: flex; align-items: center; height: 40px; padding-left: 30px; }
.d1 { padding-left: 50px; }
.d2 { padding-left: 70.500px; }
.fold { width: 15px; height: 15px; margin: 0 3px 4px 0; }
.ic { width: 32px; height: 32px; margin: 0 4px 0 0; }
.mint { color: #d6efd8; } .sky { color: #4a9ed0; } .sage { color: #78917d; }

.second { margin-top: 11px; }
.blueprint { flex: 1; overflow: hidden; }
.bbar { display: flex; align-items: center; height: 72px; padding-left: 12px; margin-bottom: 4px; }
.s2 { width: 297px; margin-left: 4px; }
.bbar > .eye { width: 36px; height: 20px; margin-left: 12px; }
.bbar > .dr { width: 18px; height: 12px; margin-left: 6px; }
.sec {
  display: flex;
  align-items: center;
  height: 48px;
  margin: 0 4px;
  padding: 0 4px 0 1px;
  background: #303030;
  border-radius: 5px 5px 0 0;
  font-size: 26.9px;
  text-shadow: 2px 2px #0a0a0a;
}
.gap { margin-top: 4px; border-radius: 5px; }
.sf { width: 15px; height: 15px; margin: 0 4px 2px 0; }
.sec b { padding-bottom: 4px; }
.sec small { font-size: 20.9px; margin: 2px 0 0 10px; color: #8d8d8d; text-shadow: none; }
.add { width: 40px; height: 37px; margin-left: auto; background: #3f3f3f; border-radius: 3px; display: flex; align-items: center; justify-content: center; }
.add svg { width: 24px; height: 24px; margin: 0 2px 2px 0; color: #fff; }
.br { display: flex; align-items: center; height: 40px; padding-left: 5px; font-size: 27px; }
.br .gi { width: 32px; height: 28px; margin: 0 6px 0 0; }
.ev { padding-left: 44px; }
.ev svg { width: 31px; height: 31px; margin-right: 7px; color: #ececec; }
.fn { padding-left: 24px; }
.fn svg { width: 32px; height: 32px; margin-right: 6px; }

/* centre column */
.center { width: 2532px; margin: 0 10px; flex: none; display: flex; flex-direction: column; }
.toolbar {
  height: 124px;
  flex: none;
  display: flex;
  background: linear-gradient(135deg, #a5851f 14px, transparent 15px) no-repeat, #3e3e3e;
  padding: 4px 0 3px 0;
}
.tool { display: flex; flex-direction: column; align-items: center; padding-top: 4px; height: 117px; flex: none; text-shadow: 2px 2px #0a0a0a; border-radius: 4px; color: #e2e2e2; }
.tool svg { width: 78px; height: 78px; margin-bottom: 0; }
.tool span { font-size: 24.500px; }
.t-compile { width: 122px; }
.ddown { width: 18px; height: 11px; margin-top: 54px; color: #b5b5b5; }
.a1 { margin-left: 14px; }
.sep { width: 3px; background: #2c2c2c; }
.s-a { margin-left: 31px; }
.t-save { width: 90px; margin-left: 24px; }
.t-save svg { width: 66px; height: 76px; margin: 0 0 2px; }
.t-browse { width: 102px; margin-left: 8px; }
.s-b { margin-left: 21px; }
.t-find { width: 90px; margin-left: 23px; }
.t-hide { width: 168px; margin-left: 20px; }
.a2 { margin-left: 32px; }
.s-c { margin-left: 33px; }
.t-set { width: 176px; margin-left: 22px; }
.t-def { width: 176px; margin-left: 17px; background: #d9820e; }
.s-d { margin-left: 25px; }
.t-sim { width: 140px; margin-left: 19px; }
.s-e { margin-left: 25px; }
.t-play { width: 80px; margin-left: 26px; }
.t-play svg { width: 68px; height: 80px; margin: 0 10px -2px 0; }
.a3 { margin-left: 30px; }
.debug { width: 327px; margin: 29px 0 0 19px; display: flex; flex-direction: column; align-items: center; gap: 3px; }
.dcombo { width: 327px; height: 44px; display: flex; align-items: center; justify-content: space-between; padding: 0 14px 0 12px; background: #dcdcdc; border: 1px solid #8f8f8f; color: #000; }
.dcombo svg { width: 18px; height: 11px; }
.gtabs { display: flex; height: 56px; flex: none; padding: 12px 0 0 8px; gap: 2px; }
.gtab { background: #2f2f2f; }
.gtab.on { background: #3e3e3e; }
.gtab .x, .ptab .x { margin-top: 4px; }
.gtab .pt { margin-right: 10px; }

.canvas {
  position: relative;
  flex: 1;
  min-height: 0;
  overflow: hidden;
  border: 4px solid #3e3e3e;
  border-bottom: 0;
  background:
    linear-gradient(#000, #000) 987px 0 / 1px 100% no-repeat,
    linear-gradient(#000, #000) 0 713px / 100% 1px no-repeat,
    repeating-linear-gradient(to right, transparent 0 123.25px, #151515 123.25px 124.25px, transparent 124.25px 172.75px),
    repeating-linear-gradient(to bottom, transparent 0 22px, #151515 22px 23px, transparent 23px 172.75px),
    repeating-linear-gradient(to right, transparent 0 15.27px, #343434 15.27px 16.27px, transparent 16.27px 21.594px),
    repeating-linear-gradient(to bottom, transparent 0 .4px, #343434 .4px 1.4px, transparent 1.4px 21.594px),
    #262626;
}
.canvas::after { content: ""; position: absolute; inset: 0; box-shadow: inset 0 0 110px rgba(0,0,0,.4); pointer-events: none; }
.crumbs {
  position: relative;
  display: flex;
  align-items: center;
  height: 84px;
  padding: 0 11px 3px 13px;
  background: rgba(8,8,8,.68);
  font-size: 37px;
  color: #8e8e8e;
}
.star { width: 42px; height: 40px; margin-right: 11px; }
.vs { width: 2px; height: 70px; background: #5a5a5a; }
.v2 { margin-left: 29px; }
.nav { width: 34px; height: 42px; }
.n1 { margin-left: 24px; }
.n2 { width: 36px; margin-left: 49px; }
.cg { width: 49px; height: 42px; margin: 0 28px 0 21px; }
.chev { width: 20px; height: 30px; margin: 3px 18px 0 15px; }
.zoom { margin-left: auto; font-size: 37.3px; color: #333; padding-bottom: 6px; }
.hint {
  position: absolute;
  left: 821px;
  top: 124px;
  width: 880px;
  height: 91px;
  text-align: center;
  border-radius: 6px;
  background: rgba(12,12,12,.8);
  color: #a2a2a2;
  font: 700 62.9px/89px "Roboto Condensed", Roboto, sans-serif;
}
.mark {
  position: absolute;
  right: 19px;
  bottom: 6px;
  font: 700 126.600px/88px "Roboto Condensed", Roboto, sans-serif;
  color: #4c4c4c;
}
.bubble {
  position: absolute;
  left: 988px;
  width: 588px;
  height: 88px;
  padding: 10px 6px 0 18px;
  display: flex;
  justify-content: space-between;
  border-radius: 6px;
  border: 1px solid #a9a9a9;
  background: linear-gradient(rgba(136,136,136,.93), rgba(152,152,152,.93));
  color: #2c2c2c;
  font-size: 27.15px;
  line-height: 32.300px;
  white-space: nowrap;
}
.bubble::after {
  content: "";
  position: absolute;
  left: 15px;
  top: 87px;
  border: 8px solid transparent;
  border-top: 13px solid #8d8d8d;
  border-bottom: 0;
}
.bi svg:first-child { width: 18px; height: 20px; margin: -4px 0 4px; }
.bi svg:last-child { width: 19px; height: 19px; }
.p1 { top: 610px; } .p2 { top: 880px; } .p3 { top: 1150px; }
.node {
  position: absolute;
  border-radius: 8px;
  background: rgba(26,26,26,.92);
  box-shadow: 0 0 0 2px rgba(10,10,10,.65), 0 5px 8px 2px rgba(0,0,0,.5);
  overflow: hidden;
}
.ev1, .ev2, .ev3 { left: 991px; }
.pa1, .pa3 { left: 1261px; }
.ev1 { top: 717px; width: 205px; height: 75px; }
.pa1 { top: 717px; width: 218px; height: 75px; }
.ev2 { top: 987px; width: 273px; height: 110px; }
.ev3 { top: 1257px; width: 159px; height: 110px; }
.pa3 { top: 1257px; width: 220px; height: 110px; }
.node header { display: flex; align-items: center; height: 30px; padding: 0 7px 0 11px; font-size: 17.65px; border-top: 1px solid #555; }
.node header svg { width: 22px; height: 22px; margin-right: 5px; }
.node header.red { background: linear-gradient(to right, #4c2022, #462224 45%, #2a2424); color: #786a6a; }
.node header.tan { background: linear-gradient(to right, #4a3522, #3f3122 45%, #272625 85%); color: #77706a; }
.dlg { width: 15px; height: 15px; margin: 0 0 2px auto; border: 3px solid #a63333; border-radius: 3px; background: #351818; }
.pins { display: flex; align-items: center; justify-content: space-between; height: 45px; padding: 0 14px; }
.ex { width: 16px; height: 19px; }
.data, .in { height: 28px; font-size: 15.700px; color: #a0a0a0; }
.data { padding-right: 15px; }
.data .lab { margin-left: auto; margin-right: 8px; }
.in { justify-content: flex-start; }
.in .lab { margin-left: 8px; }
.dot { width: 20px; height: 17px; }
.wire { position: absolute; height: 1px; background: #666; }
.w1 { left: 1182px; top: 769px; width: 94px; }
.w3 { left: 1136px; top: 1309px; width: 140px; }
.w4 { left: 1136px; top: 1346px; width: 140px; background: #3a4f24; }

/* details */
.right { width: 712px; flex: none; display: flex; flex-direction: column; }
.details { flex: 1; display: flex; flex-direction: column; min-height: 0; padding: 0 4px; }
.dbar { display: flex; align-items: center; height: 52px; padding: 4px 4px 0; flex: none; }
.s3 { width: 556px; height: 37px; }
.gridbtn { width: 52px; height: 46px; margin: 0 9px 0 18px; background: linear-gradient(#dedede, #b9b9b9); border: 1px solid #eee; border-radius: 3px; display: flex; align-items: center; justify-content: center; }
.gridbtn svg { width: 28px; height: 30px; }
.dbar .eye { width: 34px; height: 21px; }
.dbar > .dr { width: 17px; height: 10px; margin-left: 6px; color: #c9c9c9; }
.props { position: relative; flex: 1; overflow: hidden; font-size: 21px; min-height: 0; width: 704px; }
.cat {
  display: flex;
  align-items: center;
  height: 58px;
  padding: 0 0 4px 6px;
  border-radius: 5px 5px 0 0;
  background: linear-gradient(#1f1f1f, #1f1f1f) 234px 0 / 2px 100% no-repeat, #303030;
  font-size: 26.8px;
  text-shadow: 2px 2px #0a0a0a;
}
.cat .sf { margin: 8px 7px 0 0; }
.group { padding-bottom: 22px; margin-bottom: 4px; background: linear-gradient(#222, #222) 234px 0 / 2px 100% no-repeat; }
.group.tight { padding-bottom: 5px; margin-bottom: 0; }
.row { display: flex; align-items: center; height: 47px; }
.row label { position: relative; width: 202px; margin-left: 32px; overflow: hidden; flex: none; padding: 4px 0; }
.row.sub label { margin-left: 8px; padding-left: 24px; width: 226px; }
.uf { position: absolute; left: 2px; top: 5px; width: 12px; height: 18px; }
.val { display: flex; align-items: center; margin-left: 8px; }
.mat { height: 159px; }
.wep { height: 54px; }
.chk { height: 48px; }
.thumb { width: 128px; height: 129px; margin-left: 10px; border-bottom: 6px solid #3dbb3d; background: linear-gradient(#233f23, #2a502a); box-shadow: 0 0 6px 2px #1c1c1c; font-size: 18px; display: flex; align-items: center; justify-content: center; text-shadow: 1px 1px #111; }
.asset { margin: 0 0 6px 14px; }
.acombo { display: flex; align-items: center; justify-content: space-between; width: 266px; height: 36px; padding: 0 8px 3px 5px; background: #5d5d5d; border-radius: 4px; color: #fff; text-shadow: 1.500px 1.500px #111; }
.acombo svg { width: 17px; height: 11px; color: #d5d5d5; }
.aicons { display: flex; gap: 23px; padding: 12px 0 0 11px; }
.aicons svg { width: 25px; height: 25px; }
.lt, .g26 { color: #d4d4d4; }
.gr { color: #a8a8a8; }
.wcombo { display: flex; align-items: center; width: 190px; height: 37px; margin-left: 2px; padding: 0 9px 0 6px; background: linear-gradient(#d8d8d8, #a5a5a5); border: 1px solid #e5e5e5; border-radius: 2px; color: #000; box-shadow: 0 0 0 1px #1e1e1e; }
.wcombo span { flex: 1; overflow: hidden; margin-right: 4px; }
.wcombo svg { width: 17px; height: 10px; }
.g26 { width: 25px; height: 25px; margin-top: -2px; }
.k1 { margin-left: 21px; } .k2 { margin-left: 23px; } .k3 { margin-left: 22px; } .k4 { margin-left: 24px; }
.row .val .k5 { margin-left: 20px; }
.cb { width: 29px; height: 29px; margin-left: 2px; border-radius: 4px; background: #acacac; }
.cb.on { background: #d8d8d8; padding: 3px; }
.cb svg { width: 23px; height: 23px; }
.num { display: flex; align-items: center; justify-content: space-between; width: 210px; height: 33px; padding: 0 11px 0 8px; border-radius: 5px; background: #d9d9d9; color: #000; }
.num svg { width: 18px; height: 18px; margin-bottom: 1px; color: #0a0a0a; }
.num .nm { margin-left: 2px; }
.part { background: linear-gradient(to right, #eee, #aaa 19px, #777 20px, #d9d9d9 21px); }
.rs { width: 17px; height: 17px; margin: -4px 0 0 16px; }
.ro { width: 207px; height: 31px; margin-left: 2px; padding-left: 9px; line-height: 28px; background: #7a7a7a; border: 1px solid #8a8a8a; color: #ddd; }
.adv { height: 27px; display: flex; justify-content: center; align-items: flex-start; padding: 5px 32px 0 0; background: #474747; border-top: 1px solid #343434; border-radius: 0 0 5px 5px; }
.adv svg { width: 20px; height: 15px; }
.arr { height: 56px; }
.arr .cnt { width: 212px; }
.arr .cnt.a { padding-left: 8px; width: 223px; }
.arr svg.pl { width: 24px; height: 24px; color: #dcdcdc; margin-top: -4px; }
.arr .tb { width: 22px; height: 26px; margin-left: 26px; color: #cfcfcf; margin-top: -2px; }
.hp { width: 30px; height: 30px; margin-right: 20px; }
.arr .val .rs { margin-left: 21px; }
.dim > * { opacity: .5; }
.scroll { position: absolute; top: 5px; bottom: 0; right: 6px; width: 20px; background: linear-gradient(#777, #777) 10px 0 / 1px 100% no-repeat; }
.scroll i { width: 20px; height: 791px; background: #fff; border-radius: 3px; box-shadow: 0 0 0 1px #222; }
```
